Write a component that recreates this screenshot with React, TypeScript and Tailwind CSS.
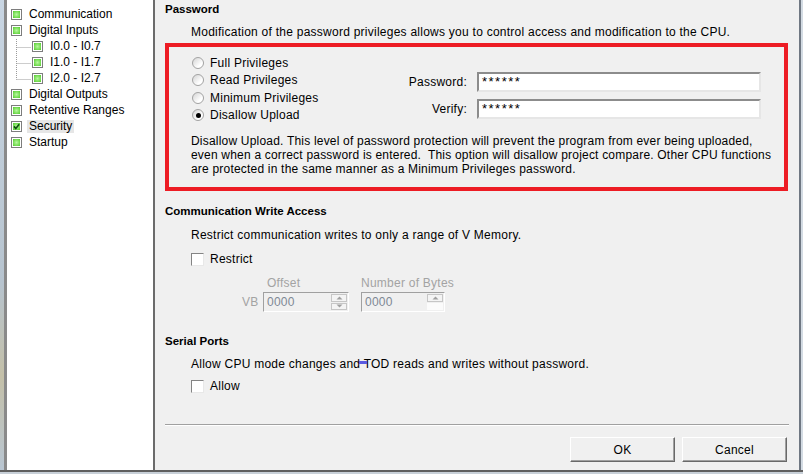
import React from 'react';

const font = "font-['Liberation_Sans',Arial,sans-serif]";

function TreeIcon({ checked = false }: { checked?: boolean }) {
  return (
    <div className="w-[11px] h-[11px] border border-[#7d7d7d] bg-white p-[1px] shrink-0">
      <div className="w-full h-full bg-[radial-gradient(circle,#b8f89e_0%,#50cb2a_100%)]">
        {checked && (
          <svg viewBox="0 0 7 7" className="w-full h-full">
            <path d="M1 3.4 L2.8 5.4 L6.2 1.2" fill="none" stroke="#0e4f0e" strokeWidth="1.6" />
          </svg>
        )}
      </div>
    </div>
  );
}

function TreeRow({ label, checked, child, selected }: { label: string; checked?: boolean; child?: boolean; selected?: boolean }) {
  return (
    <div className={`h-[16px] flex items-center ${child ? 'pl-[25px]' : 'pl-[4px]'}`}>
      <TreeIcon checked={checked} />
      <span className={`ml-[5px] px-[2px] h-[13px] leading-[13px] whitespace-nowrap ${selected ? 'bg-[#e6e6e6]' : ''}`}>
        {label}
      </span>
    </div>
  );
}

function Radio({ label, checked = false }: { label: string; checked?: boolean }) {
  return (
    <div className="h-[17.5px] flex items-center">
      <span className="w-[12px] h-[12px] ml-[1px] rounded-full border border-[#a2a2a2] bg-[linear-gradient(135deg,#d4d4d4,#ffffff_70%)] flex items-center justify-center">
        {checked && <span className="w-[5px] h-[5px] rounded-full bg-black" />}
      </span>
      <span className="ml-[6px] leading-[16px]">{label}</span>
    </div>
  );
}

function Checkbox({ label }: { label: string }) {
  return (
    <div className="h-[16px] flex items-center pl-[26px]">
      <span className="w-[13px] h-[13px] bg-white border border-t-[#848484] border-l-[#848484] border-b-[#e8e8e8] border-r-[#e8e8e8]" />
      <span className="ml-[6px]">{label}</span>
    </div>
  );
}

function Field({ label }: { label: string }) {
  return (
    <div className="flex items-center h-[20px]">
      <span className="w-[70px] text-right pr-[10px]">{label}</span>
      <div className="w-[284px] h-[20px] bg-white border-2 border-t-[#8c8c8c] border-l-[#8c8c8c] border-b-[#e6e6e6] border-r-[#e6e6e6] pl-[3px] leading-[15px] text-[13px] tracking-[1.5px]">
        ******
      </div>
    </div>
  );
}

function Arrow({ up }: { up?: boolean }) {
  return (
    <svg viewBox="0 0 7 4" className="w-[7px] h-[4px]">
      <path d={up ? 'M0.5 3.5 L3.5 0.5 L6.5 3.5 Z' : 'M0.5 0.5 L3.5 3.5 L6.5 0.5 Z'} fill="#a0a0a0" />
    </svg>
  );
}

function Spin({ width, down = true }: { width: string; down?: boolean }) {
  return (
    <div className={`flex h-[20px] ${width} bg-[#f0f0f0] border border-t-[#a0a0a0] border-l-[#a0a0a0] border-b-white border-r-white`}>
      <span className="flex-1 pl-[3px] leading-[18px] text-[#7e8894]">0000</span>
      <div className="w-[18px] flex flex-col p-[1px] gap-[1px]">
        <div className="h-[8px] flex items-center justify-center bg-[#f4f4f4] border border-[#c6c6c6]">
          <Arrow up />
        </div>
        {down ? (
          <div className="h-[8px] flex items-center justify-center bg-[#f4f4f4] border border-[#c6c6c6]">
            <Arrow />
          </div>
        ) : (
          <div className="h-[8px] bg-[#fbfbfb]" />
        )}
      </div>
    </div>
  );
}

function Button({ label }: { label: string }) {
  return (
    <button className="w-[105px] h-[25px] bg-[#f0f0f0] border border-t-white border-l-white border-b-[#696969] border-r-[#696969] shadow-[inset_-1px_-1px_0_#a0a0a0]">
      {label}
    </button>
  );
}

export default function App() {
  return (
    <div className={`w-[803px] h-[474px] bg-[#f0f0f0] flex flex-col text-[12px] text-black ${font}`}>
      <div className="h-[470px] flex">
        {/* desktop edge */}
        <div className="w-[4px] bg-[linear-gradient(180deg,#c9d6e3,#b7c4cf_60%,#c4c0a8_80%,#b9c6d2)]" />

        {/* Tree */}
        <div className="w-[151px] bg-white border-l-[3px] border-l-[#8a8a8a] border-r-2 border-r-[#6b6b6b] pt-[6.5px]">
          <TreeRow label="Communication" />
          <TreeRow label="Digital Inputs" />
          <div className="relative">
            <svg className="absolute left-0 top-0 w-[30px] h-[48px]" viewBox="0 0 30 48">
              <g stroke="#9a9a9a" strokeWidth="1" strokeDasharray="1 1" fill="none">
                <path d="M9.5 0 V40.5" />
                <path d="M9.5 8.5 H24" />
                <path d="M9.5 24.5 H24" />
                <path d="M9.5 40.5 H24" />
              </g>
            </svg>
            <TreeRow child label="I0.0 - I0.7" />
            <TreeRow child label="I1.0 - I1.7" />
            <TreeRow child label="I2.0 - I2.7" />
          </div>
          <TreeRow label="Digital Outputs" />
          <TreeRow label="Retentive Ranges" />
          <TreeRow label="Security" checked selected />
          <TreeRow label="Startup" />
        </div>

        {/* Settings panel */}
        <div className="w-[644px] px-[10px] pt-[1px] flex flex-col tracking-[0.25px]">
          <div className="h-[16px] leading-[16px] font-bold text-[11.5px] tracking-normal">Password</div>
          <div className="mt-[7px] h-[16px] leading-[16px] pl-[26px]">
            Modification of the password privileges allows you to control access and modification to the CPU.
          </div>

          <div className="mt-[3px] mr-[1px] h-[148px] border-4 border-[#ed1c24] pt-[7px] pl-[22px] pr-[23px]">
            <div className="flex justify-between h-[70px]">
              <div className="flex flex-col">
                <Radio label="Full Privileges" />
                <Radio label="Read Privileges" />
                <Radio label="Minimum Privileges" />
                <Radio label="Disallow Upload" checked />
              </div>
              <div className="flex flex-col mt-[18px] gap-[7px]">
                <Field label="Password:" />
                <Field label="Verify:" />
              </div>
            </div>
            <div className="mt-[10px] leading-[14px] whitespace-pre tracking-[0.2px]">
              {'Disallow Upload. This level of password protection will prevent the program from ever being uploaded,\neven when a correct password is entered.  This option will disallow project compare. Other CPU functions\nare protected in the same manner as a Minimum Privileges password.'}
            </div>
          </div>

          <div className="mt-[12px] h-[16px] leading-[16px] font-bold text-[11.5px] tracking-normal">Communication Write Access</div>
          <div className="mt-[8px] h-[16px] leading-[16px] pl-[26px]">
            Restrict communication writes to only a range of V Memory.
          </div>
          <div className="mt-[8px]">
            <Checkbox label="Restrict" />
          </div>
          <div className="mt-[8px] h-[16px] leading-[16px] flex text-[#a3a3a3] pl-[102px]">
            <span className="w-[94px]">Offset</span>
            <span>Number of Bytes</span>
          </div>
          <div className="mt-[1px] h-[20px] flex items-center pl-[77px]">
            <span className="w-[21px] text-[#a3a3a3]">VB</span>
            <Spin width="w-[86px]" />
            <div className="ml-[12px]">
              <Spin width="w-[84px]" down={false} />
            </div>
          </div>

          <div className="mt-[21px] h-[16px] leading-[16px] font-bold text-[11.5px] tracking-normal">Serial Ports</div>
          <div className="mt-[7px] h-[16px] leading-[16px] pl-[26px]">
            Allow CPU mode changes{' '}
            <span className="relative">
              and
              <span className="absolute right-[-7px] top-[4px] w-[8px] h-[3px] bg-[#5a5ae0]" />
            </span>{' '}
            TOD reads and writes without password.
          </div>
          <div className="mt-[6px]">
            <Checkbox label="Allow" />
          </div>

          <div className="mt-[30px] h-[2px] border-t border-t-[#a0a0a0] border-b border-b-white" />
          <div className="mt-[11px] flex justify-end gap-[7px] pr-[2px]">
            <Button label="OK" />
            <Button label="Cancel" />
          </div>
        </div>

        <div className="w-[2px] bg-[#6f7782]" />
        <div className="w-[2px] bg-[#d3dbe3]" />
      </div>
      <div className="h-[2px] bg-[#5f5f5f]" />
      <div className="h-[2px] bg-[#c8d0d8]" />
    </div>
  );
}
